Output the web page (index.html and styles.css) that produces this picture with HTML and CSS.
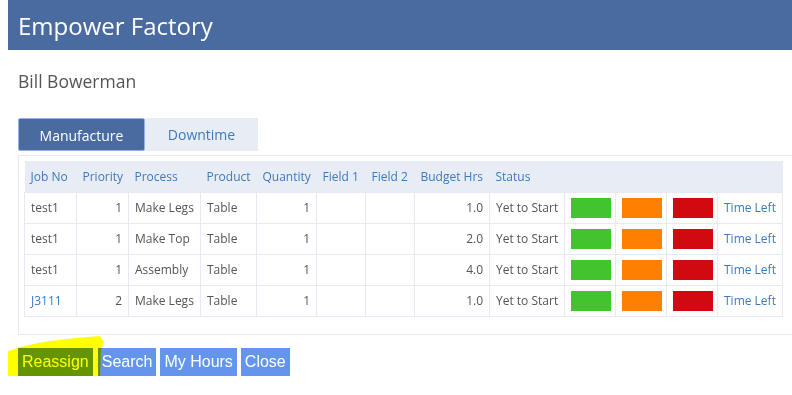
FILE: index.html
```html
<!DOCTYPE html>
<html lang="en">
<head>
    <meta charset="UTF-8">
    <meta name="viewport" content="width=device-width, initial-scale=1.0">
    <title>Empower Factory</title>
    <link rel="stylesheet" href="styles.css">
</head>
<body>

<div class="header">
    <h1>Empower Factory</h1>
</div>

<div class="content">
    <h2 class="user-name">Bill Bowerman</h2>

    <!-- Tabs -->
    <div class="tabs">
        <a class="tab active" href="#">Manufacture</a>
        <a class="tab" href="#">Downtime</a>
    </div>

    <div class="panel">
        <table class="jobs">
            <thead>
                <tr>
                    <th class="c-job">Job No</th>
                    <th class="c-pri">Priority</th>
                    <th class="c-proc">Process</th>
                    <th class="c-prod">Product</th>
                    <th class="c-qty">Quantity</th>
                    <th class="c-f">Field 1</th>
                    <th class="c-f">Field 2</th>
                    <th class="c-hrs">Budget Hrs</th>
                    <th class="c-status">Status</th>
                    <th class="c-sw"></th>
                    <th class="c-sw"></th>
                    <th class="c-sw"></th>
                    <th class="c-time"></th>
                </tr>
            </thead>
            <tbody>
                <tr>
                    <td>test1</td>
                    <td class="num">1</td>
                    <td>Make Legs</td>
                    <td>Table</td>
                    <td class="num">1</td>
                    <td></td>
                    <td></td>
                    <td class="num">1.0</td>
                    <td>Yet to Start</td>
                    <td><span class="swatch green"></span></td>
                    <td><span class="swatch orange"></span></td>
                    <td><span class="swatch red"></span></td>
                    <td><a href="#">Time Left</a></td>
                </tr>
                <tr>
                    <td>test1</td>
                    <td class="num">1</td>
                    <td>Make Top</td>
                    <td>Table</td>
                    <td class="num">1</td>
                    <td></td>
                    <td></td>
                    <td class="num">2.0</td>
                    <td>Yet to Start</td>
                    <td><span class="swatch green"></span></td>
                    <td><span class="swatch orange"></span></td>
                    <td><span class="swatch red"></span></td>
                    <td><a href="#">Time Left</a></td>
                </tr>
                <tr>
                    <td>test1</td>
                    <td class="num">1</td>
                    <td>Assembly</td>
                    <td>Table</td>
                    <td class="num">1</td>
                    <td></td>
                    <td></td>
                    <td class="num">4.0</td>
                    <td>Yet to Start</td>
                    <td><span class="swatch green"></span></td>
                    <td><span class="swatch orange"></span></td>
                    <td><span class="swatch red"></span></td>
                    <td><a href="#">Time Left</a></td>
                </tr>
                <tr>
                    <td><a href="#">J3111</a></td>
                    <td class="num">2</td>
                    <td>Make Legs</td>
                    <td>Table</td>
                    <td class="num">1</td>
                    <td></td>
                    <td></td>
                    <td class="num">1.0</td>
                    <td>Yet to Start</td>
                    <td><span class="swatch green"></span></td>
                    <td><span class="swatch orange"></span></td>
                    <td><span class="swatch red"></span></td>
                    <td><a href="#">Time Left</a></td>
                </tr>
            </tbody>
        </table>
    </div>

    <div class="actions">
        <button class="action-btn">Reassign</button>
        <button class="action-btn">Search</button>
        <button class="action-btn">My Hours</button>
        <button class="action-btn">Close</button>

        <!-- highlighter mark from the screenshot -->
        <svg class="highlight" width="110" height="56" viewBox="0 0 110 56">
            <path d="M0 20 C8 14 20 11 34 8 C52 4 76 2 100 0 L104 6 L101 14 L100 44 C84 48 66 50 46 50 C36 50 28 48 22 45 C14 42 6 40 0 38 Z" fill="#ffff00"/>
        </svg>
    </div>
</div>

</body>
</html>
```

FILE: styles.css
```css
body {
    font-family: 'Open Sans', 'Noto Sans', sans-serif;
    background-color: #fff;
    color: #555;
    margin: 0 0 0 8px;
    overflow-x: hidden;
}

.header {
    background-color: #4a6b9f;
    height: 50px;
    padding: 0 10px;
    display: flex;
    align-items: center;
}

.header h1 {
    margin: 0;
    color: #fff;
    font-size: 24px;
    font-weight: normal;
}

.content {
    padding: 0 10px;
}

.user-name {
    margin: 20px 0 0;
    font-size: 17.5px;
    font-weight: normal;
    color: #555;
    line-height: 22px;
}

.tabs {
    display: flex;
    margin-top: 26px;
}

.tab {
    display: block;
    height: 33px;
    line-height: 33px;
    font-size: 14px;
    text-decoration: none;
    color: #3a7abf;
    background-color: #e8edf5;
    padding: 0 20px;
    box-sizing: border-box;
}

.tab.active {
    background-color: #4a6b9f;
    color: #fff;
    border: 1px solid #92b4ea;
    border-radius: 2px;
    line-height: 33px;
    width: 127px;
    text-align: center;
}

.tab + .tab {
    width: 113px;
    text-align: center;
}

.panel {
    margin-top: 4px;
    border: 1px solid #e6eaf2;
    border-right: none;
    padding: 5px 5px 17px;
    width: 790px;
}

.jobs {
    border-collapse: collapse;
    table-layout: fixed;
    width: 758px;
    font-size: 12px;
}

.jobs th {
    box-sizing: border-box;
    background-color: #e8edf5;
    color: #3a7abf;
    font-weight: normal;
    text-align: left;
    height: 31px;
    padding: 0 6px;
    white-space: nowrap;
}

.jobs td {
    border: 1px solid #e6eaf2;
    height: 30px;
    padding: 0 6px;
    white-space: nowrap;
}

.jobs td.num {
    text-align: right;
}

.jobs a {
    color: #3a7abf;
    text-decoration: none;
}

.c-job { width: 52px; }
.c-pri { width: 52px; }
.c-proc { width: 72px; }
.c-prod { width: 56px; }
.c-qty { width: 60px; }
.c-f { width: 49px; }
.c-hrs { width: 75px; }
.c-status { width: 75px; }
.c-sw { width: 51px; }
.c-time { width: 65px; }

.swatch {
    display: block;
    width: 40px;
    height: 20px;
}

.green { background-color: #43c42f; }
.orange { background-color: #ff7f00; }
.red { background-color: #d10a12; }

.actions {
    position: relative;
    margin-top: 13px;
    display: flex;
    gap: 4px;
}

.action-btn {
    font-family: 'Liberation Sans', Arial, sans-serif;
    font-size: 16px;
    color: #fff;
    background-color: #6495ed;
    border: none;
    height: 28px;
    padding: 0 4px;
    cursor: pointer;
}

.action-btn:first-child {
    margin-right: 1px;
}

.highlight {
    position: absolute;
    left: -18px;
    top: -12px;
    mix-blend-mode: multiply;
    pointer-events: none;
}
```
